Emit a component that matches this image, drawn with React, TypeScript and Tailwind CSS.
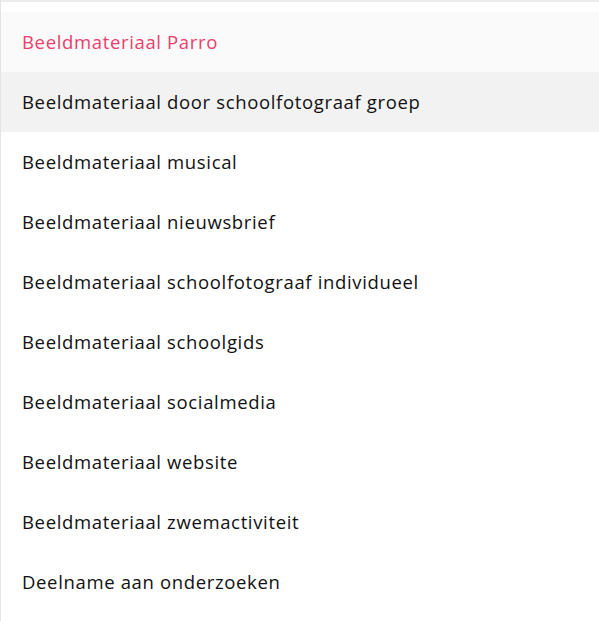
import React from "react";

const items = [
  "Beeldmateriaal Parro",
  "Beeldmateriaal door schoolfotograaf groep",
  "Beeldmateriaal musical",
  "Beeldmateriaal nieuwsbrief",
  "Beeldmateriaal schoolfotograaf individueel",
  "Beeldmateriaal schoolgids",
  "Beeldmateriaal socialmedia",
  "Beeldmateriaal website",
  "Beeldmateriaal zwemactiviteit",
  "Deelname aan onderzoeken",
];

export default function App() {
  return (
    <div
      className="h-[621px] w-[599px] overflow-hidden bg-white border-l border-[#e4e4e4]"
      style={{ fontFamily: '"Open Sans", "Noto Sans", sans-serif' }}
    >
      <div className="h-[2px] bg-[#ececec]" />
      <ul className="pt-[10px]">
        {items.map((label, i) => (
          <li
            key={label}
            className={`flex h-[60px] items-center pl-[21px] text-[18.5px] tracking-[0.035em] ${
              i === 0
                ? "bg-[#fafafa] text-[#e93f6c]"
                : i === 1
                ? "bg-[#f2f2f2] text-[#111111]"
                : "text-[#111111]"
            }`}
          >
            {label}
          </li>
        ))}
      </ul>
    </div>
  );
}
